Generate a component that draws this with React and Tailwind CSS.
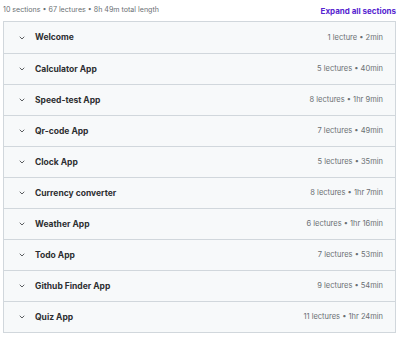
import React from "react";

const sections = [
  { title: "Welcome", meta: "1 lecture • 2min" },
  { title: "Calculator App", meta: "5 lectures • 40min" },
  { title: "Speed-test App", meta: "8 lectures • 1hr 9min" },
  { title: "Qr-code App", meta: "7 lectures • 49min" },
  { title: "Clock App", meta: "5 lectures • 35min" },
  { title: "Currency converter", meta: "8 lectures • 1hr 7min" },
  { title: "Weather App", meta: "6 lectures • 1hr 16min" },
  { title: "Todo App", meta: "7 lectures • 53min" },
  { title: "Github Finder App", meta: "9 lectures • 54min" },
  { title: "Quiz App", meta: "11 lectures • 1hr 24min" }
];

function Chevron() {
  return (
    <svg width="8" height="8" viewBox="0 0 8 8" fill="none" className="shrink-0">
      <path d="M2 3l2 2 2-2" stroke="#4a4d50" strokeWidth="0.9" strokeLinecap="round" strokeLinejoin="round" />
    </svg>
  );
}

export default function App() {
  return (
    <div className="w-[400px] h-[337px] bg-white font-['Inter',sans-serif] overflow-hidden">
      <div className="flex items-center justify-between h-[21px] pl-[3px] pr-[4px]">
        <span className="text-[7.1px] text-[#6a6f73]">10 sections • 67 lectures • 8h 49m total length</span>
        <span className="text-[8px] font-bold text-[#5624d0]">Expand all sections</span>
      </div>
      <div className="ml-[3px] mr-[4px] border border-[#d1d7dc] bg-[#f7f9fa]">
        {sections.map((s, i) => (
          <div
            key={i}
            className={`flex items-center h-[31px] pl-[14px] pr-[12px] ${i > 0 ? "border-t border-[#d1d7dc]" : ""}`}
          >
            <Chevron />
            <span className="ml-[9px] text-[8.5px] font-bold text-[#2d2f31]">{s.title}</span>
            <span className="ml-auto text-[7.5px] text-[#6a6f73]">{s.meta}</span>
          </div>
        ))}
      </div>
    </div>
  );
}
